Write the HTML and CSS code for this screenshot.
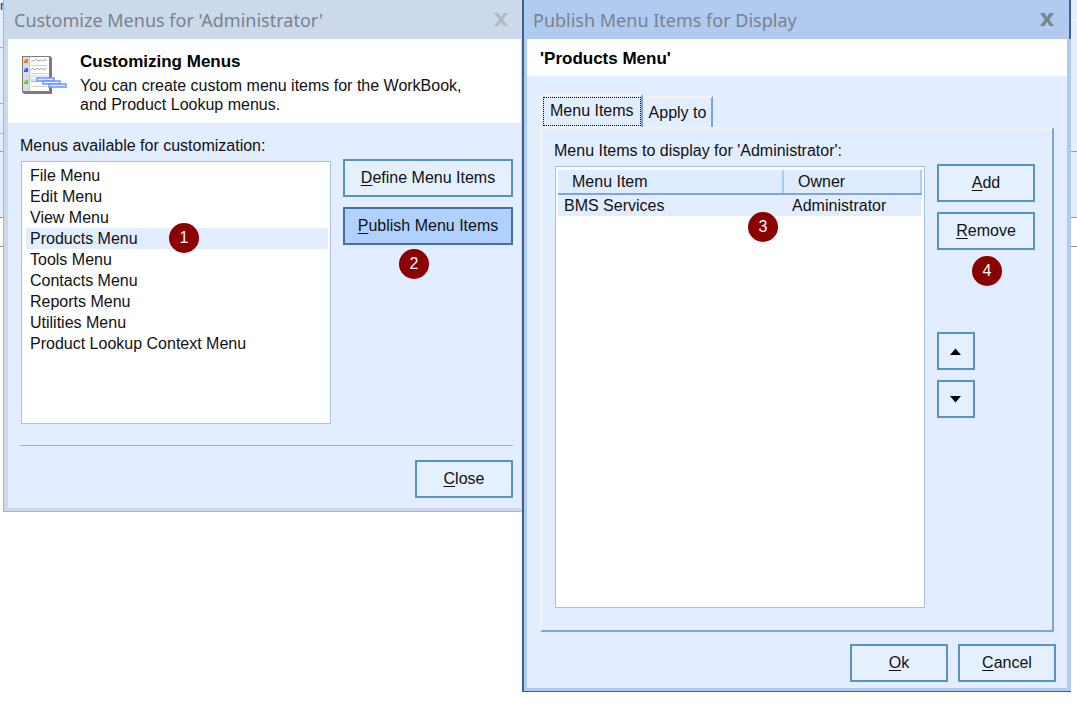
FILE: index.html
```html
<!DOCTYPE html>
<html lang="en">
<head>
<meta charset="utf-8">
<title>Customize Menus</title>
<link rel="stylesheet" href="styles.css">
</head>
<body>
<div class="backdrop" aria-hidden="true">
  <div class="strip strip-a">r</div>
  <div class="strip strip-b"><div class="row row-1"></div><div class="row row-2"></div><div class="row row-3"></div></div>
  <div class="strip strip-c"></div>
  <div class="strip strip-d"></div>
</div>
<main class="desktop">
  <section class="window window-back">
    <header class="titlebar">
      <h1 class="title">Customize Menus for 'Administrator'</h1>
      <button class="win-close" type="button" aria-label="Close window"><svg width="14" height="13" viewBox="0 0 14 13"><path d="M0 0h4l3 4L10 0H14L9 6.500 14 13H10L7 9 4 13H0L5 6.500z"/></svg></button>
    </header>
    <div class="intro">
      <svg class="intro-icon" width="46" height="40" viewBox="0 0 46 40" aria-hidden="true">
        <path d="M1 1H29L31 3V39H3L1 37Z" fill="#7d7d7d"/>
        <path d="M2 2H28V36H2Z" fill="#fff"/>
        <path d="M2 2H8V36H2Z" fill="#dcdcdc"/>
        <path d="M8.500 2V36" stroke="#c5c5c5"/>
        <path d="M10 6h3l2-2 2 2 3-1 2 1 2-2 2 2M10 15l2-2 2 2 2-2 2 2 2-2 2 2 2-2 1 2M10 27l3-1 2 1 2-1" fill="none" stroke="#aaa"/>
        <path d="M10 10.500H26M10 18.500H26M10 31.500H26" stroke="#d0d0d0"/>
        <path d="M9 21H27V25H9Z" fill="#f5f8ff" stroke="#c3d1ff"/>
        <path d="M3 4h4v4H3z" fill="#ef7a20"/><path d="M3 13h4v4H3z" fill="#3d5cf0"/><path d="M3 25h4v4H3z" fill="#77c62c"/>
        <path d="M3 4h2v2H3zM3 13h2v2H3zM3 25h2v2H3z" fill="#fff" fill-opacity=".4"/>
        <g fill="#e6edff" stroke="#6f95ff" stroke-width="1.500"><path d="M16 23H33V26H16Z"/><path d="M22 26H39V29H22Z"/><path d="M28 29H45V32H28Z"/></g>
      </svg>
      <div class="intro-text">
        <h2 class="heading">Customizing Menus</h2>
        <p class="copy">You can create custom menu items for the WorkBook,<br>and Product Lookup menus.</p>
      </div>
    </div>
    <div class="back-body">
      <p class="label" id="menus-label">Menus available for customization:</p>
      <div class="columns">
        <ul class="listbox" role="listbox" aria-labelledby="menus-label">
          <li class="option" role="option">File Menu</li>
          <li class="option" role="option">Edit Menu</li>
          <li class="option" role="option">View Menu</li>
          <li class="option selected" role="option" aria-selected="true">Products Menu<span class="marker marker-1">1</span></li>
          <li class="option" role="option">Tools Menu</li>
          <li class="option" role="option">Contacts Menu</li>
          <li class="option" role="option">Reports Menu</li>
          <li class="option" role="option">Utilities Menu</li>
          <li class="option" role="option">Product Lookup Context Menu</li>
        </ul>
        <div class="side-buttons">
          <button class="btn" type="button"><u>D</u>efine Menu Items</button>
          <div class="marked"><button class="btn active" type="button"><u>P</u>ublish Menu Items</button><span class="marker marker-2">2</span></div>
        </div>
      </div>
      <div class="back-footer">
        <button class="btn btn-small" type="button"><u>C</u>lose</button>
      </div>
    </div>
  </section>
  <section class="window window-front">
    <header class="titlebar">
      <h1 class="title">Publish Menu Items for Display</h1>
      <button class="win-close" type="button" aria-label="Close window"><svg width="14" height="13" viewBox="0 0 14 13"><path d="M0 0h4.500l2.500 4L9.500 0H14L9.300 6.400 14 13H9.500L7 8.700 4.500 13H0L4.700 6.400z"/></svg></button>
    </header>
    <div class="subject"><h2 class="heading">'Products Menu'</h2></div>
    <div class="front-body">
      <div class="tabs" role="tablist">
        <button class="tab current" type="button" role="tab" aria-selected="true"><span class="tab-text">Menu Items</span></button>
        <button class="tab" type="button" role="tab">Apply to</button>
      </div>
      <div class="panel" role="tabpanel">
        <p class="label">Menu Items to display for 'Administrator':</p>
        <div class="panel-columns">
          <div class="grid-box">
            <table class="items">
              <thead><tr><th class="col-item">Menu Item</th><th>Owner</th></tr></thead>
              <tbody><tr><td>BMS Services</td><td>Administrator</td></tr></tbody>
            </table>
            <span class="marker marker-3">3</span>
          </div>
          <div class="panel-buttons">
            <button class="btn" type="button"><u>A</u>dd</button>
            <div class="marked"><button class="btn" type="button"><u>R</u>emove</button><span class="marker marker-4">4</span></div>
            <div class="movers">
              <button class="btn btn-square" type="button" aria-label="Move up"><svg width="12" height="7" viewBox="0 0 12 7"><path d="M0 7 5.500 0.500 11 7z"/></svg></button>
              <button class="btn btn-square" type="button" aria-label="Move down"><svg width="12" height="7" viewBox="0 0 12 7"><path d="M0 0 5.500 6.500 11 0z"/></svg></button>
            </div>
          </div>
        </div>
      </div>
      <div class="front-footer">
        <button class="btn btn-small" type="button"><u>O</u>k</button>
        <button class="btn btn-small" type="button"><u>C</u>ancel</button>
      </div>
    </div>
  </section>
</main>
</body>
</html>
```

FILE: styles.css
```css
* { box-sizing: border-box; }
body {
  margin: 0;
  background: #fff;
  color: #111;
  font: 16px/20px "Liberation Sans", Arial, sans-serif;
}
h1, h2, p, ul { margin: 0; padding: 0; }
button { font: inherit; color: inherit; padding: 0; margin: 0; }
u { text-underline-offset: 2px; }

.backdrop { position: absolute; inset: 0 0 auto 0; z-index: -1; background: #e3eeff; }
.strip-a { height: 21px; border-bottom: 2px solid #f8f4e8; font-size: 13px; line-height: 12px; color: #1c2c58; }
.strip-b { height: 131px; border-bottom: 1px solid #7ba0d8; }
.strip-c { height: 66px; border-bottom: 1px solid #7ba0d8; }
.strip-d { height: 29px; border-bottom: 1px solid #8c8c8c; background: #fff; }
.row { width: 50%; border-bottom: 1px solid #8fb6e8; }
.row-1 { height: 27px; }
.row-2 { height: 56px; }
.row-3 { height: 30px; }

.desktop {
  display: grid;
  grid-template-columns: 519fr 549fr;
  align-items: start;
  padding: 0 6px 0 3px;
}
.titlebar {
  display: flex;
  justify-content: space-between;
  align-items: center;
  height: 39px;
  padding: 0 13px 0 6px;
}
.title { font: 18px/24px "Noto Sans", "Open Sans", sans-serif; color: #7b818c; white-space: nowrap; }
.win-close { display: flex; border: 0; background: none; fill: #778593; }

.window-back { background: #ccd9ea; border: solid #a9b4c4; border-width: 0 0 1px 1px; padding: 0 1px 3px 4px; }
.window-back .win-close { fill: #afb9c6; }
.intro { display: flex; gap: 13px; height: 84px; padding: 13px; background: #fff; }
.intro-icon { margin-top: 3px; flex: none; }
.heading { font-size: 17px; line-height: 20px; color: #000; white-space: nowrap; }
.copy { line-height: 19px; margin-top: 4px; white-space: nowrap; }
.back-body { background: #e2eeff; padding: 13px 8px 10px 12px; }
.label { line-height: 20px; white-space: nowrap; }
.columns { display: flex; gap: 12px; padding: 3px 0 21px 1px; }
.listbox {
  flex: 310 1 0;
  height: 263px;
  margin-top: 2px;
  padding: 3px 2px 4px 4px;
  list-style: none;
  background: #fff;
  border: 1px solid #a9c0e2;
}
.option { position: relative; line-height: 21px; padding-left: 4px; }
.selected { background: #e2eeff; }
.side-buttons { flex: 170 1 0; min-width: 170px; display: flex; flex-direction: column; gap: 10px; }
.btn {
  display: flex;
  align-items: center;
  justify-content: center;
  width: 100%;
  height: 38px;
  background: #e5f0ff;
  border: 2px solid #5a92c3;
  border-radius: 0;
  white-space: pre;
}
.active { background: #b0d1ff; border-color: #476f9e; }
.btn-small { width: 98px; }
.btn-square { width: 38px; }
.marked { position: relative; }
.back-footer { display: flex; justify-content: flex-end; border-top: 1px solid #8fb0d8; padding-top: 14px; }
.marker {
  position: absolute;
  width: 30px;
  height: 30px;
  border-radius: 50%;
  background: #8b0000;
  color: #fff;
  text-align: center;
  line-height: 30px;
}
.marker-1 { left: 143px; top: -5px; }
.marker-2 { left: 56px; top: 42px; }
.marker-3 { left: 192px; top: 45px; }
.marker-4 { left: 35px; top: 44px; }

.window-front { background: #b0caf0; border: solid #3c5f94; border-width: 0 0 1px 2px; padding: 0 4px 3px 3px; }
.window-front .titlebar { margin-right: -4px; padding-right: 15px; border-right: 2px solid #3c5f94; }
.subject { background: #fff; height: 37px; padding: 10px 13px; }
.front-body { background: #e2eeff; padding: 18px 11px 6px 13px; }
.tabs { display: flex; align-items: flex-end; }
.tab {
  height: 31px;
  padding: 0 5px 0 6px;
  background: #e2eeff;
  border: solid #f6f3e4;
  border-width: 2px 2px 0 0;
  border-right-color: #7ba3dc;
  white-space: nowrap;
}
.current { height: 33px; padding: 1px 0 3px 1px; border-left-width: 2px; border-top-left-radius: 4px; }
.tab-text { display: block; border: 1px dotted #000; padding: 3px 6px 4px; line-height: 20px; }
.panel {
  margin-right: 2px;
  border: 2px solid #f6f3e4;
  border-right-color: #7ba3dc;
  border-bottom-color: #7ba3dc;
  padding: 12px 17px 22px 12px;
}
.panel-columns { display: flex; gap: 12px; padding: 4px 0 0 1px; }
.grid-box { position: relative; flex: 1; height: 442px; margin-top: 1px; padding: 3px 2px; background: #fff; border: 1px solid #a9c0e2; }
.items { width: 100%; border-collapse: collapse; table-layout: fixed; }
.items th { height: 24px; padding: 0 14px; font-weight: 400; text-align: left; background: #dfebff; border-bottom: 2px solid #7fa6dc; border-right: 2px solid #a8cdfa; }
.items td { height: 22px; padding: 0 6px; background: #e2eeff; }
.items td + td { padding-left: 9px; }
.col-item { width: 62%; }
.panel-buttons { width: 98px; display: flex; flex-direction: column; gap: 10px; margin-top: -1px; }
.movers { display: flex; flex-direction: column; gap: 10px; margin-top: 72px; }
.front-footer { display: flex; justify-content: flex-end; gap: 10px; margin-top: 12px; }
```
